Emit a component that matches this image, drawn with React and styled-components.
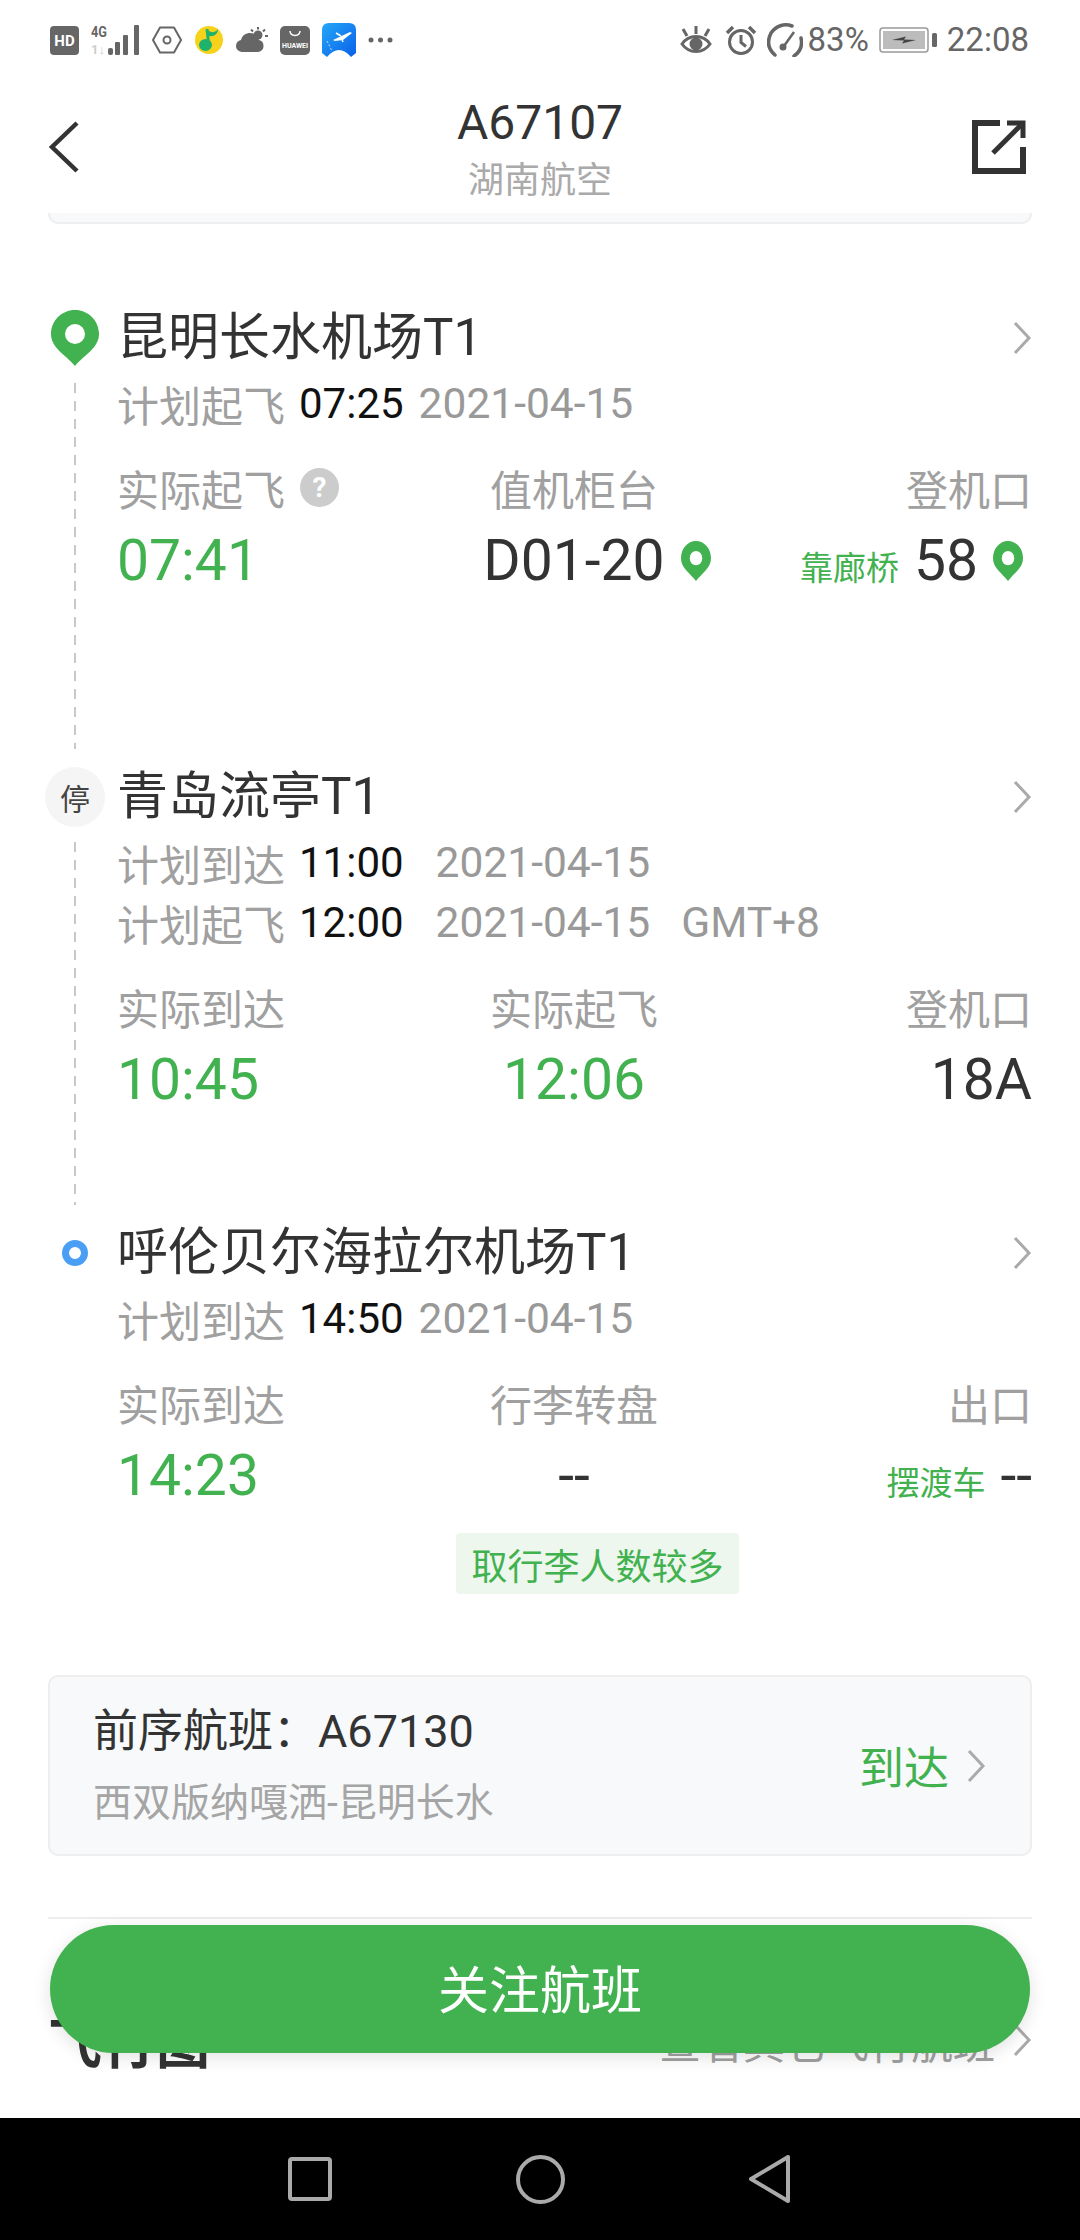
import React from 'react'
import styled, { createGlobalStyle } from 'styled-components'

const GREEN = '#42b14f'

const GlobalStyle = createGlobalStyle`
  html, body {
    margin: 0;
    padding: 0;
    background: #fff;
  }
  * {
    box-sizing: border-box;
  }
  body {
    font-family: Roboto, "Noto Sans CJK SC", sans-serif;
    color: #333;
  }
`

const Screen = styled.div`
  display: flex;
  flex-direction: column;
  width: 1080px;
  height: 2240px;
  overflow: hidden;
  background: #fff;
`

const StatusBar = styled.div`
  display: flex;
  align-items: center;
  justify-content: space-between;
  flex: none;
  height: 80px;
  padding: 0 51px 0 50px;
  color: #666;
`

const StatusGroup = styled.div`
  display: flex;
  align-items: center;
  gap: ${p => p.$gap}px;
`

const StatusText = styled.span`
  margin-left: ${p => p.$ml || 0}px;
  font-size: ${p => p.$size}px;
  line-height: 40px;
  color: #666;
  white-space: nowrap;
`

const StatusIcon = styled.svg`
  flex: none;
  margin-left: ${p => p.$ml || 0}px;
  fill: none;
  stroke: #666;
`

const Header = styled.header`
  display: grid;
  grid-template-columns: 1fr auto 1fr;
  align-items: start;
  flex: none;
  height: 133px;
  padding: 15px 54px 0 48px;
`

const HeaderIcon = styled.svg`
  justify-self: ${p => p.$side};
  margin-top: 25px;
  fill: none;
  stroke: #333;
`

const HeaderTitle = styled.div`
  display: flex;
  flex-direction: column;
  align-items: center;
  transform: translateX(3px);
`

const FlightNo = styled.div`
  font-size: 48px;
  line-height: 56px;
  color: #333;
`

const Airline = styled.div`
  margin-top: 5px;
  font-size: 36px;
  line-height: 50px;
  color: #aaa;
`

const Main = styled.main`
  position: relative;
  flex: 1;
  min-height: 0;
  overflow: hidden;
`

const CardRemnant = styled.div`
  height: 11px;
  margin: 0 48px 84px;
  background: #f8f9fb;
  border: 2px solid #eee;
  border-top: none;
  border-radius: 0 0 10px 10px;
`

const Stop = styled.section`
  display: grid;
  grid-template-columns: 60px 1fr;
  column-gap: 12px;
  padding: 0 48px 0 45px;
`

const Rail = styled.div`
  display: flex;
  flex-direction: column;
  align-items: center;
`

const Marker = styled.div`
  display: flex;
  align-items: center;
  justify-content: center;
  flex: none;
  height: 60px;
`

const StopBadge = styled.div`
  display: flex;
  align-items: center;
  justify-content: center;
  width: 60px;
  height: 60px;
  border-radius: 50%;
  background: #f5f5f5;
  font-size: 30px;
  color: #444;
`

const BlueDot = styled.div`
  width: 26px;
  height: 26px;
  border: 7px solid #4a9ff5;
  border-radius: 50%;
  background: #fff;
`

const RailLine = styled.div`
  flex: 1;
  width: 2px;
  margin: 15px 0 18px;
  background: repeating-linear-gradient(to bottom, #c8c8c8 0 10px, transparent 10px 18px);
`

const StopBody = styled.div`
  min-width: 0;
  padding-bottom: ${p => p.$bottom}px;
`

const TitleRow = styled.div`
  display: flex;
  align-items: center;
  justify-content: space-between;
  height: 60px;
`

const StopTitle = styled.h2`
  margin: 0;
  font-size: 51px;
  font-weight: 400;
  line-height: 60px;
  color: #333;
`

const Chevron = styled.svg`
  flex: none;
  fill: none;
  stroke: #aaa;
  stroke-width: 3;
`

const PlanList = styled.div`
  display: flex;
  flex-direction: column;
  gap: 8px;
  margin-top: 9px;
`

const PlanLine = styled.div`
  display: flex;
  align-items: center;
  height: 52px;
  font-size: 42px;
  color: #a0a0a0;
  white-space: nowrap;
`

const PlanTime = styled.span`
  margin-left: 14px;
  color: #111;
`

const PlanDate = styled.span`
  margin-left: ${p => p.$gap}px;
  font-size: 42.5px;
  color: #999;
`

const InfoGrid = styled.div`
  display: grid;
  grid-template-columns: 367px 180px 1fr;
  grid-template-rows: 52px 60px;
  row-gap: 18px;
  margin-top: 32px;
`

const InfoLabel = styled.div`
  display: flex;
  align-items: center;
  justify-content: ${p => p.$align || 'flex-start'};
  gap: 15px;
  font-size: 42px;
  color: #a0a0a0;
  white-space: nowrap;
`

const HelpMark = styled.span`
  display: flex;
  align-items: center;
  justify-content: center;
  width: 39px;
  height: 39px;
  border-radius: 50%;
  background: #ccc;
  font-size: 28px;
  font-weight: 700;
  color: #fff;
`

const InfoValue = styled.div`
  display: flex;
  align-items: baseline;
  justify-content: ${p => p.$align || 'flex-start'};
  font-size: 57px;
  line-height: 60px;
  color: ${p => (p.$green ? GREEN : '#333')};
  white-space: nowrap;
`

const ValueWithPin = styled.span`
  position: relative;
`

const FloatingPin = styled.svg`
  position: absolute;
  top: 10px;
  right: -46px;
`

const InlinePin = styled.svg`
  flex: none;
  align-self: center;
  margin: 0 9px 0 15px;
`

const ValueNote = styled.span`
  margin-right: 15px;
  font-size: 33px;
  color: ${GREEN};
`

const Tag = styled.div`
  display: flex;
  align-items: center;
  justify-content: center;
  width: 283px;
  height: 61px;
  margin: 27px 0 0 339px;
  border-radius: 4px;
  background: #edf7ee;
  font-size: 36px;
  color: ${GREEN};
`

const PreviousCard = styled.div`
  display: flex;
  align-items: center;
  justify-content: space-between;
  height: 181px;
  margin: 81px 48px 0;
  padding: 0 44px 0 43px;
  background: #f8f9fb;
  border: 2px solid #eee;
  border-radius: 10px;
`

const PreviousTitle = styled.div`
  font-size: 45px;
  line-height: 56px;
  color: #333;
`

const PreviousRoute = styled.div`
  margin-top: 18px;
  font-size: 39px;
  line-height: 50px;
  color: #a5a5a5;
`

const PreviousStatus = styled.div`
  display: flex;
  align-items: center;
  gap: 17px;
  font-size: 45px;
  color: ${GREEN};
`

const Divider = styled.div`
  height: 2px;
  margin: 61px 48px 0;
  background: #eee;
`

const SectionRow = styled.div`
  display: flex;
  align-items: center;
  justify-content: space-between;
  height: 60px;
  margin: 91px 48px 0 48px;
`

const SectionTitle = styled.h3`
  margin: 0;
  font-size: 54px;
  font-weight: 700;
  color: #333;
`

const SectionLink = styled.div`
  display: flex;
  align-items: center;
  gap: 17px;
  font-size: 42px;
  color: #a0a0a0;
`

const FollowButton = styled.button`
  position: absolute;
  left: 50px;
  right: 50px;
  bottom: 65px;
  height: 128px;
  padding: 0 0 4px;
  border: none;
  border-radius: 64px;
  background: ${GREEN};
  box-shadow: 0 4px 18px rgba(0, 0, 0, 0.12);
  font-family: inherit;
  font-size: 51px;
  color: #fff;
`

const NavBar = styled.nav`
  display: flex;
  align-items: center;
  justify-content: center;
  flex: none;
  gap: 184px;
  height: 122px;
  padding-right: 3px;
  background: #000;
`

const NavIcon = styled.svg`
  flex: none;
  fill: none;
  stroke: #aaa;
  stroke-width: 4;
  stroke-linejoin: round;
`

const PIN_PATH = 'M24 0C10.7 0 0 10.7 0 24C0 38 15 45 24 56C33 45 48 38 48 24C48 10.7 37.3 0 24 0Z'

const PinShape = ({ hole = 10 }) => (
  <>
    <path d={PIN_PATH} fill={GREEN} />
    <circle cx="24" cy="24" r={hole} fill="#fff" />
  </>
)

const RowChevron = () => (
  <Chevron width="20" height="34" viewBox="0 0 20 34">
    <polyline points="3,2 17,17 3,32" />
  </Chevron>
)

const LeftStatus = () => (
  <StatusGroup $gap={12}>
    <svg width="29" height="29" viewBox="0 0 29 29">
      <rect width="29" height="29" rx="4" fill="#666" />
      <text x="14.5" y="20" textAnchor="middle" fontSize="15" fontWeight="700" fontFamily="Roboto" fill="#fff">HD</text>
    </svg>
    <svg width="49" height="31" viewBox="0 0 49 31">
      <text x="0" y="12" fontSize="15" fontWeight="700" fontFamily="Roboto" fill="#666" textLength="16" lengthAdjust="spacingAndGlyphs">4G</text>
      <text x="0" y="29" fontSize="13" fontWeight="700" fontFamily="Roboto" fill="#ccc">1↓</text>
      <rect x="17" y="23" width="5" height="7" rx="2" fill="#666" />
      <rect x="24" y="17" width="5" height="13" rx="1" fill="#666" />
      <rect x="32" y="10" width="5" height="20" rx="1" fill="#666" />
      <rect x="43" y="0" width="5" height="30" rx="1" fill="#666" />
    </svg>
    <svg width="30" height="28" viewBox="0 0 30 28" fill="none" stroke="#666" strokeWidth="2">
      <path d="M8 1.5H22L29 14L22 26.5H8L1 14Z" strokeLinejoin="round" />
      <circle cx="15" cy="14" r="3.5" />
    </svg>
    <svg width="30" height="28" viewBox="0 0 30 28">
      <circle cx="15" cy="14" r="14" fill="#f6d31a" />
      <path d="M13 3L14.5 17" stroke="#1fb26c" strokeWidth="3" fill="none" />
      <path d="M14 4C17 7 21 7 24 3C24 8 20 11 15 10Z" fill="#1fb26c" />
      <ellipse cx="11.5" cy="19" rx="6.5" ry="6" fill="#1fb26c" />
    </svg>
    <svg width="32" height="26" viewBox="0 0 32 26">
      <path d="M7 25C3 25 0 22.500 0 19C0 16 2 13.500 5 13C6 8.500 10 6 14 6C19 6 22 9.500 23 13C26 13.500 27.500 16 27.500 19C27.500 22.500 25 25 21 25Z" fill="#666" />
      <circle cx="22" cy="8" r="4.500" fill="#666" />
      <path d="M22 0V2.500M29 2.500L27 4.500M32 9H29M15 2.500L17 4.500" stroke="#666" strokeWidth="2" />
    </svg>
    <svg width="30" height="29" viewBox="0 0 30 29">
      <rect width="30" height="29" rx="5" fill="#666" />
      <path d="M10 5C10.500 11 19.500 11 20 5" stroke="#fff" strokeWidth="1.500" fill="none" />
      <text x="15" y="22" textAnchor="middle" fontSize="7" fontWeight="700" fontFamily="Roboto" fill="#fff" textLength="26" lengthAdjust="spacingAndGlyphs">HUAWEI</text>
    </svg>
    <svg width="34" height="34" viewBox="0 0 34 34">
      <defs>
        <linearGradient id="planeApp" x1="0" y1="0" x2="1" y2="1">
          <stop offset="0" stopColor="#23a8f7" />
          <stop offset="1" stopColor="#0b5fe9" />
        </linearGradient>
      </defs>
      <path d="M7 0H27Q34 0 34 7V30L29 34Q17 20 5 34L0 30V7Q0 0 7 0Z" fill="url(#planeApp)" />
      <path d="M11 17L28 9L30 10L21 17L13 18Z" fill="#fff" />
      <path d="M14 10L19 13M19 14L21 19" stroke="#fff" strokeWidth="1.500" />
      <path d="M5 18L10 28" stroke="#bfe3ff" strokeWidth="1" strokeDasharray="2 2" />
    </svg>
    <svg width="25" height="6" viewBox="0 0 25 6" fill="#666">
      <circle cx="3" cy="3" r="2.500" />
      <circle cx="12.500" cy="3" r="2.500" />
      <circle cx="22" cy="3" r="2.500" />
    </svg>
  </StatusGroup>
)

const RightStatus = () => (
  <StatusGroup $gap={10}>
    <StatusIcon width="32" height="29" viewBox="0 0 32 29" strokeWidth="3">
      <path d="M2 18C9 8 23 8 30 18C23 28 9 28 2 18Z" />
      <circle cx="16" cy="18" r="6.500" fill="#666" stroke="none" />
      <path d="M16 8V0M7 10L3 3M25 10L29 3" />
    </StatusIcon>
    <StatusIcon $ml={3} width="32" height="30" viewBox="0 0 32 30" strokeWidth="3">
      <circle cx="16" cy="17" r="11.500" />
      <path d="M16 10V17.500L21 21.500" />
      <path d="M2 8L8 2M30 8L24 2" strokeWidth="3.500" />
    </StatusIcon>
    <StatusIcon width="36" height="34" viewBox="0 0 36 34" strokeWidth="3.500">
      <path d="M8 32C1 26 0 18 4 10C9 3 17 0 25 3" strokeLinecap="round" />
      <path d="M27 33C33 29 36 24 34 15" strokeLinecap="round" />
      <path d="M17 23L27 9" strokeWidth="2.500" />
      <circle cx="16" cy="24" r="3.500" fill="#666" stroke="none" />
    </StatusIcon>
    <StatusText $ml={-5} $size={33}>83%</StatusText>
    <svg width="58" height="26" viewBox="0 0 58 26">
      <rect x="1" y="1" width="48" height="24" rx="3" fill="#fff" stroke="#999" strokeWidth="1.500" />
      <rect x="4" y="4" width="42" height="18" fill="#bcbcbc" />
      <path d="M13 13L27 9.500L25 12.500L37 13L23 16.500L25 13.500Z" fill="#444" />
      <rect x="53" y="6" width="5" height="14" rx="1.500" fill="#666" />
    </svg>
    <StatusText $size={33}>22:08</StatusText>
  </StatusGroup>
)

const App = () => (
  <Screen>
    <GlobalStyle />
    <StatusBar>
      <LeftStatus />
      <RightStatus />
    </StatusBar>
    <Header>
      <HeaderIcon $side="start" width="32" height="54" viewBox="0 0 32 54" strokeWidth="4.500">
        <polyline points="29,3 4,27 29,51" />
      </HeaderIcon>
      <HeaderTitle>
        <FlightNo>A67107</FlightNo>
        <Airline>湖南航空</Airline>
      </HeaderTitle>
      <HeaderIcon $side="end" width="54" height="54" viewBox="0 0 54 54" strokeWidth="6">
        <path d="M28 3H3V51H51V27" />
        <path d="M35 3H51V18" strokeWidth="5" />
        <path d="M51 3L21 33" strokeWidth="5" />
      </HeaderIcon>
    </Header>
    <Main>
      <CardRemnant />

      <Stop>
        <Rail>
          <Marker>
            <svg width="48" height="56" viewBox="0 0 48 56"><PinShape /></svg>
          </Marker>
          <RailLine />
        </Rail>
        <StopBody $bottom={176}>
          <TitleRow>
            <StopTitle>昆明长水机场T1</StopTitle>
            <RowChevron />
          </TitleRow>
          <PlanList>
            <PlanLine>
              计划起飞<PlanTime>07:25</PlanTime><PlanDate $gap={15}>2021-04-15</PlanDate>
            </PlanLine>
          </PlanList>
          <InfoGrid>
            <InfoLabel>实际起飞<HelpMark>?</HelpMark></InfoLabel>
            <InfoLabel $align="center">值机柜台</InfoLabel>
            <InfoLabel $align="flex-end">登机口</InfoLabel>
            <InfoValue $green>07:41</InfoValue>
            <InfoValue $align="center">
              <ValueWithPin>
                D01-20
                <FloatingPin width="30" height="40" viewBox="0 0 48 56" preserveAspectRatio="none"><PinShape /></FloatingPin>
              </ValueWithPin>
            </InfoValue>
            <InfoValue $align="flex-end">
              <ValueNote>靠廊桥</ValueNote>
              58
              <InlinePin width="30" height="40" viewBox="0 0 48 56" preserveAspectRatio="none"><PinShape /></InlinePin>
            </InfoValue>
          </InfoGrid>
        </StopBody>
      </Stop>

      <Stop>
        <Rail>
          <Marker><StopBadge>停</StopBadge></Marker>
          <RailLine />
        </Rail>
        <StopBody $bottom={113}>
          <TitleRow>
            <StopTitle>青岛流亭T1</StopTitle>
            <RowChevron />
          </TitleRow>
          <PlanList>
            <PlanLine>
              计划到达<PlanTime>11:00</PlanTime><PlanDate $gap={32}>2021-04-15</PlanDate>
            </PlanLine>
            <PlanLine>
              计划起飞<PlanTime>12:00</PlanTime><PlanDate $gap={32}>2021-04-15</PlanDate><PlanDate $gap={31}>GMT+8</PlanDate>
            </PlanLine>
          </PlanList>
          <InfoGrid>
            <InfoLabel>实际到达</InfoLabel>
            <InfoLabel $align="center">实际起飞</InfoLabel>
            <InfoLabel $align="flex-end">登机口</InfoLabel>
            <InfoValue $green>10:45</InfoValue>
            <InfoValue $green $align="center">12:06</InfoValue>
            <InfoValue $align="flex-end">18A</InfoValue>
          </InfoGrid>
        </StopBody>
      </Stop>

      <Stop>
        <Rail>
          <Marker><BlueDot /></Marker>
        </Rail>
        <StopBody>
          <TitleRow>
            <StopTitle>呼伦贝尔海拉尔机场T1</StopTitle>
            <RowChevron />
          </TitleRow>
          <PlanList>
            <PlanLine>
              计划到达<PlanTime>14:50</PlanTime><PlanDate $gap={15}>2021-04-15</PlanDate>
            </PlanLine>
          </PlanList>
          <InfoGrid>
            <InfoLabel>实际到达</InfoLabel>
            <InfoLabel $align="center">行李转盘</InfoLabel>
            <InfoLabel $align="flex-end">出口</InfoLabel>
            <InfoValue $green>14:23</InfoValue>
            <InfoValue $align="center">--</InfoValue>
            <InfoValue $align="flex-end">
              <ValueNote>摆渡车</ValueNote>
              --
            </InfoValue>
          </InfoGrid>
          <Tag>取行李人数较多</Tag>
        </StopBody>
      </Stop>

      <PreviousCard>
        <div>
          <PreviousTitle>前序航班：A67130</PreviousTitle>
          <PreviousRoute>西双版纳嘎洒-昆明长水</PreviousRoute>
        </div>
        <PreviousStatus>
          到达
          <RowChevron />
        </PreviousStatus>
      </PreviousCard>

      <Divider />

      <SectionRow>
        <SectionTitle>飞行图</SectionTitle>
        <SectionLink>
          查看其它飞行航班
          <RowChevron />
        </SectionLink>
      </SectionRow>

      <FollowButton>关注航班</FollowButton>
    </Main>
    <NavBar>
      <NavIcon width="44" height="44" viewBox="0 0 44 44">
        <rect x="2" y="2" width="40" height="40" rx="2" />
      </NavIcon>
      <NavIcon width="49" height="49" viewBox="0 0 49 49">
        <circle cx="24.500" cy="24.500" r="22.500" />
      </NavIcon>
      <NavIcon width="41" height="48" viewBox="0 0 41 48">
        <path d="M39 2V46L2 24Z" />
      </NavIcon>
    </NavBar>
  </Screen>
)

export default App
